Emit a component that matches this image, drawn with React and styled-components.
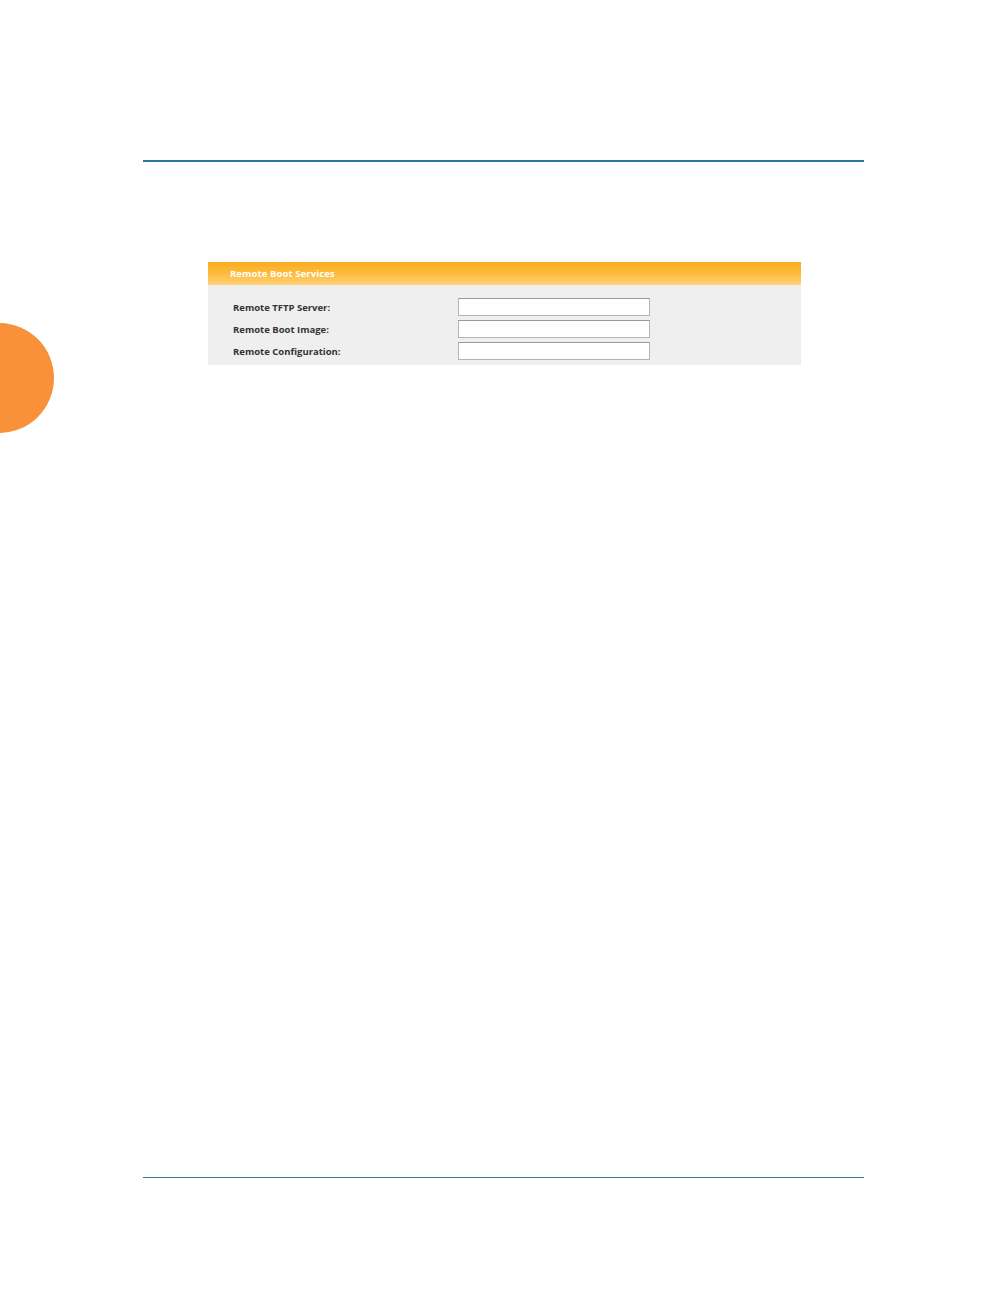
import styled, { createGlobalStyle } from "styled-components";

const GlobalStyle = createGlobalStyle`
  html, body {
    margin: 0;
    padding: 0;
    background: #fff;
  }
  body {
    font-family: "Open Sans", "Noto Sans", sans-serif;
  }
`;

const Page = styled.div`
  position: relative;
  width: 1008px;
  height: 1296px;
  overflow: hidden;
  background: #fff;
`;

const Sheet = styled.div`
  padding: 160px 144px 0 143px;
  display: flex;
  flex-direction: column;
`;

const Rule = styled.div`
  height: ${(p) => p.thick}px;
  background: #2f77a3;
`;

const Content = styled.div`
  height: 1015px;
  padding: 100px 64px 0 65px;
  box-sizing: border-box;
`;

// chapter tab on the left margin
const Tab = styled.div`
  position: absolute;
  left: -56px;
  top: 323px;
  width: 110px;
  height: 110px;
  border-radius: 50%;
  background: #f8913a;
`;

const Panel = styled.div`
  width: 593px;
  background: #efefef;
`;

const Header = styled.div`
  height: 23px;
  padding-left: 22px;
  display: flex;
  align-items: center;
  background: linear-gradient(to bottom, #fbad22 0%, #fdbb3a 50%, #ffd27c 100%);
  color: #fff;
  font-size: 9.5px;
  font-weight: 700;
  letter-spacing: 0.1px;
`;

const Body = styled.div`
  padding: 13px 0 5px 25px;
  display: flex;
  flex-direction: column;
  gap: 4px;
`;

const Row = styled.div`
  display: flex;
  align-items: center;
  height: 18px;
`;

const Label = styled.label`
  width: 225px;
  font-size: 9.5px;
  font-weight: 700;
  color: #333;
`;

const Field = styled.input`
  width: 192px;
  height: 18px;
  box-sizing: border-box;
  margin: 0;
  border: 1px solid #b4b4b4;
  border-top-color: #999;
  background: #fff;
  padding: 0 3px;
  outline: none;
`;

const fields = ["Remote TFTP Server:", "Remote Boot Image:", "Remote Configuration:"];

export default function App() {
  return (
    <Page>
      <GlobalStyle />
      <Tab />
      <Sheet>
        <Rule thick={2} />
        <Content>
          <Panel>
            <Header>Remote Boot Services</Header>
            <Body>
              {fields.map((f) => (
                <Row key={f}>
                  <Label>{f}</Label>
                  <Field type="text" />
                </Row>
              ))}
            </Body>
          </Panel>
        </Content>
        <Rule thick={1} />
      </Sheet>
    </Page>
  );
}
